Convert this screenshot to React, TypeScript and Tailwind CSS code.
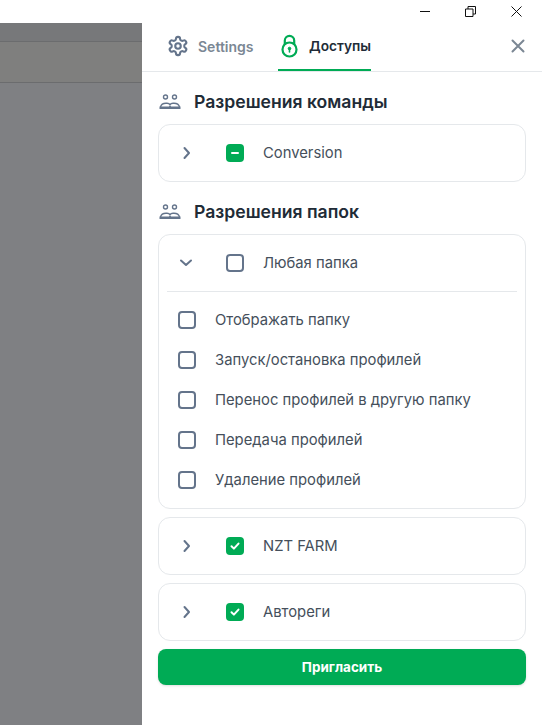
const inter = "font-['Inter',sans-serif]";

function Team() {
  return (
    <svg width="22" height="16" viewBox="0 0 22 16" fill="none" stroke="#64748b" strokeWidth="1.4" className="ml-px shrink-0">
      <circle cx="6.500" cy="3" r="2" />
      <circle cx="15.500" cy="3" r="2" />
      <path d="M1.500 13c.6-2.500 3-3.800 5.500-3.800h1c1.400 0 2.400.5 3 1.500.6-1 1.600-1.500 3-1.500h1c2.500 0 4.900 1.300 5.500 3.800" />
      <path d="M.5 12.600h7.500c1.400 0 2.400-.4 3-1.200.6.800 1.600 1.200 3 1.200h7.500V15H.5z" fill="#64748b" stroke="none" />
    </svg>
  );
}

function Chevron({ open }: { open?: boolean }) {
  return (
    <svg width="16" height="16" viewBox="0 0 16 16" fill="none" stroke="#64748b" strokeWidth="2" strokeLinecap="round" strokeLinejoin="round" className={open ? '' : 'translate-x-[0.5px]'}>
      {open ? <path d="M3 5.500l5 4.500 5-4.500" /> : <path d="M6 3l4.500 5L6 13" />}
    </svg>
  );
}

function Check({ state }: { state: 'on' | 'off' | 'some' }) {
  if (state === 'off') {
    return <span className="block h-[18px] w-[18px] shrink-0 rounded-[4px] border-2 border-[#64748b] bg-white" />;
  }
  return (
    <span className="flex h-[18px] w-[18px] shrink-0 items-center justify-center rounded-[4px] bg-[#00ab55]">
      {state === 'on' ? (
        <svg width="12" height="12" viewBox="0 0 12 12" fill="none" stroke="white" strokeWidth="2" strokeLinecap="round" strokeLinejoin="round">
          <path d="M2.500 6.300l2.400 2.300 4.600-5" />
        </svg>
      ) : (
        <span className="block h-[2px] w-2 rounded-sm bg-white" />
      )}
    </span>
  );
}

function Row({ label, state, open }: { label: string; state: 'on' | 'off' | 'some'; open?: boolean }) {
  return (
    <div className="flex h-14 items-center pl-[19px]">
      <Chevron open={open} />
      <span className="ml-8"><Check state={state} /></span>
      <span className="ml-[19px] text-[14.800px] text-[#454f5b]">{label}</span>
    </div>
  );
}

function Heading({ children }: { children: string }) {
  return (
    <div className="flex h-5 items-center gap-[13px]">
      <Team />
      <h2 className="text-[17.600px] font-semibold text-[#212b36]">{children}</h2>
    </div>
  );
}

const folderPerms = [
  'Отображать папку',
  'Запуск/остановка профилей',
  'Перенос профилей в другую папку',
  'Передача профилей',
  'Удаление профилей',
];

export default function App() {
  return (
    <div className={`flex h-[725px] w-[542px] flex-col overflow-hidden bg-white ${inter}`}>
      <div className="flex h-[23px] shrink-0 items-center justify-end">
        <svg width="10" height="2" viewBox="0 0 10 2" className="mr-[35px]"><path d="M0 .5h10" stroke="#111" /></svg>
        <svg width="11" height="11" viewBox="0 0 11 11" fill="none" stroke="#111" className="mr-[35px]">
          <path d="M.5 3h7.500v7.500H.5z M3 3V.5h7.500V8H8" />
        </svg>
        <svg width="11" height="11" viewBox="0 0 11 11" fill="none" stroke="#111" className="mr-[20px]"><path d="M.5.5l10 10M10.500.5l-10 10" /></svg>
      </div>

      <div className="flex min-h-0 flex-1">
        <div className="flex w-[142px] shrink-0 flex-col bg-[#7f8083]">
          <div className="h-[19px] border-b border-[#6b6c6e] bg-[#77787a]" />
          <div className="h-[41px] border-b border-[#6b6c6e] bg-[#7f7f7e]" />
        </div>

        <div className="flex-1 bg-white">
          <div className="flex h-[49px] items-stretch border-b border-[#e5e8eb] pl-[25px] pr-[17px]">
            <div className="flex w-[87px] -translate-y-px items-center gap-[9px] text-[#7b8794]">
              <svg width="22" height="22" viewBox="0 0 24 24" fill="none" stroke="#64748b" strokeWidth="2.300" strokeLinecap="round" strokeLinejoin="round" className="shrink-0">
                <path d="M12.220 2h-.44a2 2 0 0 0-2 2v.18a2 2 0 0 1-1 1.730l-.43.250a2 2 0 0 1-2 0l-.15-.08a2 2 0 0 0-2.730.730l-.22.380a2 2 0 0 0 .730 2.730l.15.100a2 2 0 0 1 1 1.720v.510a2 2 0 0 1-1 1.740l-.15.090a2 2 0 0 0-.730 2.730l.22.380a2 2 0 0 0 2.730.730l.15-.08a2 2 0 0 1 2 0l.43.250a2 2 0 0 1 1 1.730V20a2 2 0 0 0 2 2h.44a2 2 0 0 0 2-2v-.18a2 2 0 0 1 1-1.730l.43-.250a2 2 0 0 1 2 0l.15.080a2 2 0 0 0 2.730-.730l.22-.390a2 2 0 0 0-.730-2.730l-.15-.080a2 2 0 0 1-1-1.740v-.500a2 2 0 0 1 1-1.740l.15-.090a2 2 0 0 0 .730-2.730l-.22-.380a2 2 0 0 0-2.730-.730l-.15.080a2 2 0 0 1-2 0l-.43-.250a2 2 0 0 1-1-1.730V4a2 2 0 0 0-2-2z" />
                <circle cx="12" cy="12" r="3" />
              </svg>
              <span className="text-[14px] font-semibold">Settings</span>
            </div>
            <div className="relative ml-[24px] flex items-center gap-[11px] pl-[3px] text-[#212b36]">
              <svg width="17" height="24" viewBox="0 0 17 24" fill="none" stroke="#00ab55" strokeWidth="2.200" className="-translate-y-px">
                <path d="M3.800 11V6.500a4.700 4.700 0 0 1 9.400 0V11" />
                <circle cx="8.500" cy="15.500" r="7" />
                <circle cx="8.500" cy="14.500" r="1.300" fill="#00ab55" strokeWidth="1" />
                <path d="M8.500 15v3" strokeWidth="1.600" strokeLinecap="round" />
              </svg>
              <span className="-translate-y-px text-[13.700px] font-semibold">Доступы</span>
              <span className="absolute inset-x-0 bottom-0 h-[2px] bg-[#00ab55]" />
            </div>
            <div className="ml-auto flex -translate-y-px items-center">
              <svg width="14" height="14" viewBox="0 0 14 14" fill="none" stroke="#7b8794" strokeWidth="2" strokeLinecap="round"><path d="M1.500 1.500l11 11M12.500 1.500l-11 11" /></svg>
            </div>
          </div>

          <div className="px-4 pt-5">
            <Heading>Разрешения команды</Heading>
            <div className="mt-3 rounded-xl border border-[#e5e8eb]">
              <Row label="Conversion" state="some" />
            </div>

            <div className="mt-[20px]"><Heading>Разрешения папок</Heading></div>
            <div className="mt-3 rounded-xl border border-[#e5e8eb]">
              <Row label="Любая папка" state="off" open />
              <div className="mx-2 border-t border-[#e5e8eb]" />
              <div className="pt-2 pb-2">
                {folderPerms.map((p) => (
                  <div key={p} className="flex h-10 items-center pl-[19px]">
                    <Check state="off" />
                    <span className="ml-[19px] text-[14.800px] text-[#454f5b]">{p}</span>
                  </div>
                ))}
              </div>
            </div>

            <div className="mt-2 rounded-xl border border-[#e5e8eb]">
              <Row label="NZT FARM" state="on" />
            </div>
            <div className="mt-2 rounded-xl border border-[#e5e8eb]">
              <Row label="Автореги" state="on" />
            </div>
            <button className="mt-2 flex h-9 w-full items-center justify-center rounded-lg bg-[#00ab55] text-[13.500px] font-bold text-white shadow-sm">
              Пригласить
            </button>
          </div>
        </div>
      </div>
    </div>
  );
}
